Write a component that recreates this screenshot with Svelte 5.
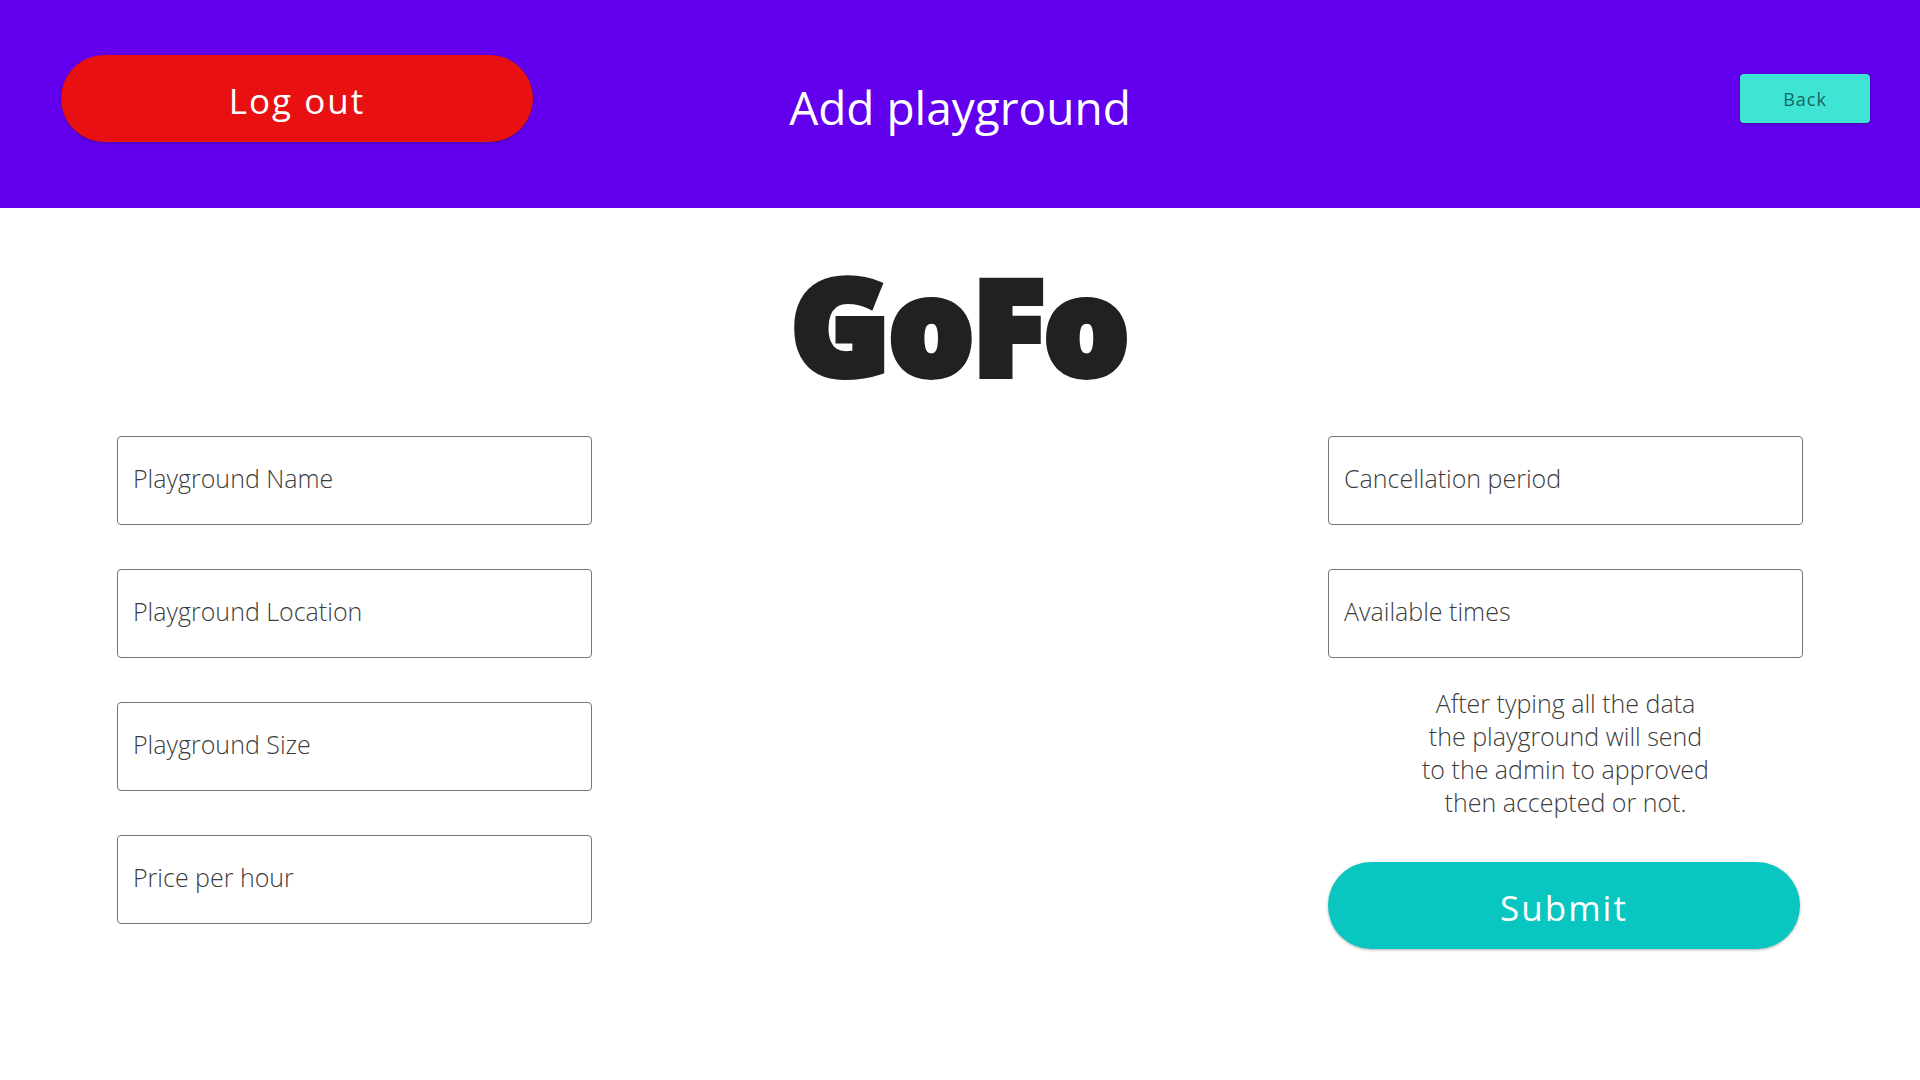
<script>
  const details = [
    { id: 'name', label: 'Playground Name' },
    { id: 'location', label: 'Playground Location' },
    { id: 'size', label: 'Playground Size' },
    { id: 'price', label: 'Price per hour' }
  ];
  const booking = [
    { id: 'cancellation', label: 'Cancellation period' },
    { id: 'times', label: 'Available times' }
  ];
</script>

{#snippet field(item)}
  <input class="field" type="text" id={item.id} name={item.id} aria-label={item.label} placeholder={item.label} />
{/snippet}

<header class="bar">
  <button class="pill logout" type="button">Log out</button>
  <h1 class="title">Add playground</h1>
  <button class="back" type="button">Back</button>
</header>

<main class="page">
  <div class="logo">GoFo</div>
  <form class="form" onsubmit={(event) => event.preventDefault()}>
    <div class="column">
      {#each details as item (item.id)}
        {@render field(item)}
      {/each}
    </div>
    <div class="column">
      {#each booking as item (item.id)}
        {@render field(item)}
      {/each}
      <div class="finish">
        <p class="note">
          After typing all the data<br />
          the playground will send<br />
          to the admin to approved<br />
          then accepted or not.
        </p>
        <button class="pill submit" type="submit">Submit</button>
      </div>
    </div>
  </form>
</main>

<style>
  :global(body) {
    margin: 0;
    background: #fff;
    font-family: "Open Sans", "Noto Sans", sans-serif;
  }

  button,
  input {
    box-sizing: border-box;
    font-family: inherit;
  }

  button {
    border: 0;
    cursor: pointer;
  }

  .bar {
    display: grid;
    grid-template-columns: 1fr auto 1fr;
    align-items: center;
    padding: 55px 50px 66px;
    background: #6200ee;
  }

  .pill {
    width: 100%;
    max-width: 472px;
    height: 87px;
    padding: 5px 0 0;
    border-radius: 44px;
    color: #fff;
    font-size: 35px;
    line-height: 48px;
    letter-spacing: 2px;
    box-shadow: 0 1px 3px rgba(0, 0, 0, 0.3);
  }

  .logout {
    margin-left: 11px;
    background: #e81010;
  }

  .title {
    margin: 0;
    padding-top: 16px;
    color: #fff;
    font-size: 46px;
    font-weight: 400;
    line-height: 64px;
  }

  .back {
    justify-self: end;
    width: 130px;
    height: 49px;
    padding: 0;
    border-radius: 4px;
    background: #40e4d5;
    color: #13675f;
    font-size: 18px;
    letter-spacing: 1px;
    box-shadow: 0 1px 3px rgba(0, 0, 0, 0.3);
  }

  .page {
    padding: 50px 117px;
  }

  .logo {
    color: #212121;
    font-size: 132px;
    font-weight: 800;
    line-height: 132px;
    text-align: center;
    -webkit-text-stroke: 8px #212121;
  }

  .form {
    display: grid;
    grid-template-columns: minmax(0, 475px) minmax(0, 475px);
    justify-content: space-between;
    align-items: start;
    gap: 44px;
    margin-top: 46px;
  }

  .column {
    display: grid;
    gap: 44px;
  }

  .field {
    width: 100%;
    height: 89px;
    padding: 0 15px 5px;
    border: 1px solid #757575;
    border-radius: 4px;
    background: #fff;
    color: #212121;
    font-size: 25px;
    font-weight: 300;
  }

  .field::placeholder {
    color: #3c3c3c;
    opacity: 1;
  }

  .finish {
    margin-top: -15px;
  }

  .note {
    margin: 0 0 43px;
    color: #3c3c3c;
    font-size: 25px;
    font-weight: 300;
    line-height: 33px;
    text-align: center;
  }

  .submit {
    background: #0ac6c1;
  }
</style>
